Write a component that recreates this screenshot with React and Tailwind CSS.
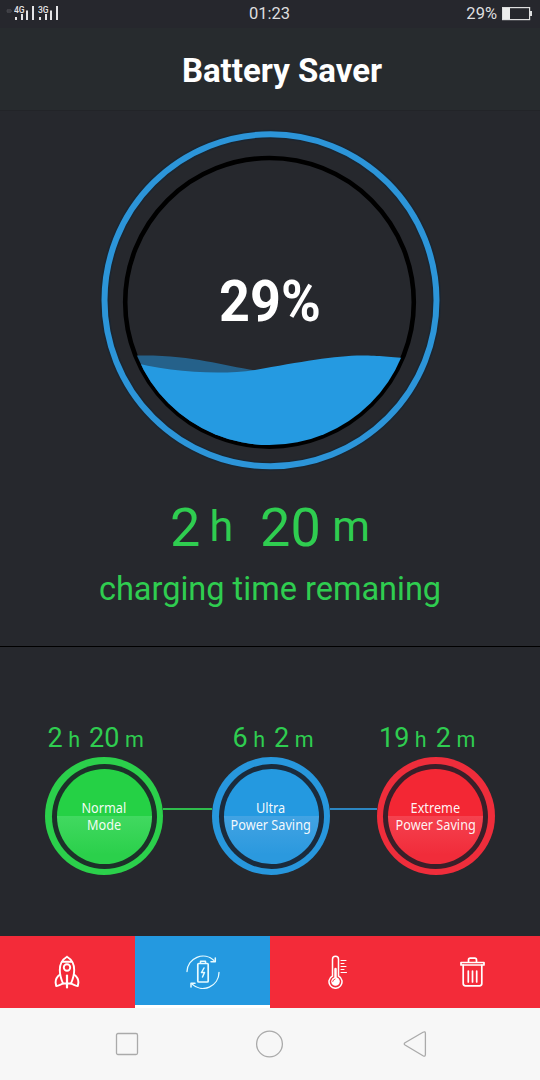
import React from "react";

function Signal({ label }) {
  return (
    <svg width="22" height="16" viewBox="0 0 22 16" className="shrink-0">
      <text x="0" y="6.5" fontFamily="Roboto, sans-serif" fontSize="8.500" fontWeight="500" fill="#e4e4e6">{label}</text>
      <g fill="#e4e4e6">
        <rect x="1" y="11" width="2" height="3" />
        <rect x="7" y="8" width="2" height="6" />
        <rect x="12" y="4.500" width="2" height="9.500" />
        <rect x="18" y="0" width="2" height="14" />
      </g>
    </svg>
  );
}

function StatusBar() {
  return (
    <div className="grid h-7 grid-cols-[1fr_auto_1fr] items-center bg-[#26272d] px-[6px] text-[#dededf]">
      <div className="flex items-center">
        <svg width="8" height="12" viewBox="0 0 8 12" className="mb-[5px]" stroke="#56575c" strokeWidth="1" fill="none">
          <path d="M2 3v4M4 3v4M0.500 5h1M5 5h1" />
        </svg>
        <Signal label="4G" />
        <div className="ml-[1.5px]"><Signal label="3G" /></div>
      </div>
      <div className="-ml-px text-[16.5px] leading-7">01:23</div>
      <div className="flex items-center justify-end gap-[5px] pr-[2px]">
        <span className="text-[16.5px] leading-7">29%</span>
        <svg width="30" height="14" viewBox="0 0 30 14">
          <rect x="0.6" y="0.6" width="27" height="12" fill="none" stroke="#dededf" strokeWidth="1.2" />
          <rect x="1" y="1" width="7" height="11" fill="#ececec" />
          <rect x="28" y="4" width="2" height="5" fill="#dededf" />
        </svg>
      </div>
    </div>
  );
}

function Gauge() {
  return (
    <div className="grid h-[378px] grid-cols-1 grid-rows-1">
      <svg width="540" height="378" viewBox="0 111 540 378" className="col-start-1 row-start-1">
        <defs>
          <clipPath id="bowl"><circle cx="269.5" cy="302.3" r="142.8" /></clipPath>
        </defs>
        <circle cx="270.5" cy="300.3" r="166" fill="none" stroke="#142434" strokeWidth="9" opacity="0.6" />
        <circle cx="270.5" cy="300.3" r="166" fill="none" stroke="#2c95d9" strokeWidth="6" />
        <circle cx="269.5" cy="302.3" r="144.3" fill="none" stroke="#000" strokeWidth="4.6" />
        <g clipPath="url(#bowl)">
          <path d="M125 356C195 353 220 367 265 371.500V450H125Z" fill="#25618a" />
          <path d="M125 360.500C165 371 215 376 255 370C300 362 335 355.500 362 355.500C380 355.500 390 357 415 359V460H125Z" fill="#259ae1" />
        </g>
      </svg>
      <div className="col-start-1 row-start-1 self-start justify-self-center pt-[157px]">
        <div className="scale-x-[0.98] scale-y-[1.05] text-[55px] leading-[66px] font-bold text-white">29%</div>
      </div>
    </div>
  );
}

function ModeTime({ hours, minutes, className }) {
  return (
    <div className={"flex items-baseline text-[27px] leading-[32px] whitespace-pre " + className}>
      <span>{hours}</span>
      <span className="ml-[5.5px] text-[21.5px]">h</span>
      <span className="ml-[9px]">{minutes}</span>
      <span className="ml-[5.5px] text-[21.5px]">m</span>
    </div>
  );
}

function Mode({ lines, ring, gap, disc }) {
  return (
    <div className={"flex size-[118px] shrink-0 rounded-full p-[6.5px] " + ring}>
      <div className={"flex flex-1 rounded-full p-[5px] " + gap}>
        <div className={"flex flex-1 flex-col items-center justify-center rounded-full pt-[2px] text-[13.5px] leading-[17px] whitespace-nowrap text-white/95 " + disc}>
          {lines.map((l) => (
            <span key={l} className="scale-x-[0.94] font-['Noto_Sans',sans-serif]">{l}</span>
          ))}
        </div>
      </div>
    </div>
  );
}

function Rocket() {
  return (
    <svg width="26" height="34" viewBox="0 0 26 34" className="-translate-x-px" fill="none" stroke="#fff" strokeWidth="1.900" strokeLinejoin="round" strokeLinecap="round">
      <path d="M13 1.800C8.500 4.500 5.800 9 5.800 15C5.800 20.500 7.500 25 9 28.500M13 1.800C17.500 4.500 20.200 9 20.200 15C20.200 20.500 18.500 25 17 28.500" />
      <path d="M8.500 6.800H17.500" />
      <circle cx="13" cy="12.500" r="3.200" />
      <path d="M6 19.500C3 21.500 1.600 24 1.600 27.500L2.200 31C4 31 6 30 8.800 28.500M20 19.500C23 21.500 24.400 24 24.400 27.500L23.800 31C22 31 20 30 17.200 28.500" />
      <path d="M9 28.500H17" />
      <path d="M13 20.500V32.500" strokeWidth="2.200" />
    </svg>
  );
}

function BatteryCycle() {
  return (
    <svg width="34" height="34" viewBox="0 0 34 34" fill="none" stroke="#e8fbff" strokeWidth="1.3" strokeLinecap="round" strokeLinejoin="round">
      <path d="M1 16.500A16 16 0 0 1 28 5.500M33 17.500A16 16 0 0 1 6 29" />
      <path d="M29.300 3V6.700H25M5 32V28.300H9" strokeWidth="1.500" />
      <rect x="11.800" y="8.500" width="10.400" height="18.500" rx="1" strokeWidth="1.700" />
      <path d="M14.500 8V6.300H19.500V8" strokeWidth="1.500" />
      <path d="M18 13L15.500 17.500H18.500L16.500 22" strokeWidth="1.500" />
    </svg>
  );
}

function Thermometer() {
  return (
    <svg width="20" height="34" viewBox="0 0 20 34" fill="none" stroke="#fff" strokeWidth="1.5" strokeLinecap="round">
      <path d="M4.500 21V4.200A3 3 0 0 1 10.500 4.200V21A6.500 6.500 0 1 1 4.500 21Z" />
      <path d="M7.500 14V25" strokeWidth="2.500" />
      <circle cx="7.500" cy="26.500" r="4.300" fill="#fff" stroke="none" />
      <path d="M4.700 26.500A3 3 0 0 1 7 24" stroke="#f32b39" strokeWidth="0.900" />
      <path d="M13 5.500H18M13 8.500H16M13 11.500H18M13 14.500H16M13 17.500H18.500" strokeWidth="1.100" />
    </svg>
  );
}

function Trash() {
  return (
    <svg width="25" height="30" viewBox="0 0 25 30" fill="none" stroke="#fff" strokeWidth="1.700" strokeLinejoin="round" strokeLinecap="round">
      <path d="M1 5.500H24V8H1ZM8.500 5V3Q8.500 1.200 10.200 1.200H14.800Q16.500 1.200 16.500 3V5" />
      <path d="M3.200 8V26.500Q3.200 28.800 5.500 28.800H19.500Q21.800 28.800 21.800 26.500V8" />
      <path d="M8.300 14V25M12.500 14V25M16.700 14V25" />
    </svg>
  );
}

function Tab({ children, active }) {
  return (
    <div className={"flex flex-1 items-center justify-center " + (active ? "border-b-[3px] border-white bg-[#2499e0] pt-[3px]" : "bg-[#f32b39]")}>
      {children}
    </div>
  );
}

export default function App() {
  return (
    <div className="flex h-[1080px] w-[540px] flex-col overflow-hidden bg-[#26282d] font-[Roboto,sans-serif]">
      <StatusBar />
      <header className="flex h-[83px] items-center justify-center border-b border-[#222428] bg-[#272b2e] pt-1 pl-6">
        <h1 className="text-[33px] leading-10 font-bold text-white">Battery Saver</h1>
      </header>
      <Gauge />
      <section className="flex h-[157px] flex-col items-center text-[#2fcd50]">
        <div className="mt-[6px] flex h-[64px] text-[54px] leading-[65px]">
          <span>2</span>
          <span className="ml-[9px] text-[43px] leading-[63px]">h</span>
          <span className="ml-[27px]">20</span>
          <span className="ml-[11.5px] text-[43px] leading-[63px]">m</span>
        </div>
        <div className="mt-[8px] text-[32.5px] leading-[44px]">charging time remaning</div>
      </section>
      <section className="h-[290px] border-t border-black pt-[75px]">
        <div className="flex h-[35px] text-[#2fcd50]">
          <ModeTime hours="2" minutes="20" className="w-[184px] pl-[47.5px]" />
          <ModeTime hours="6" minutes="2" className="w-[194px] pl-[48.5px]" />
          <ModeTime hours="19" minutes="2" className="pl-px" />
        </div>
        <div className="flex pl-[45px]">
          <Mode lines={["Normal", "Mode"]} ring="bg-[#2bd04b]" gap="bg-[#1d3029]" disc="bg-[linear-gradient(#25d145_0%,#25d145_50%,#41d960_50%,#2bd04b_90%)]" />
          <div className="mt-[51px] h-[2px] w-[49px] bg-[#2fbd4c]" />
          <Mode lines={["Ultra", "Power Saving"]} ring="bg-[#2797dd]" gap="bg-[#1b2b3c]" disc="bg-[linear-gradient(#2499e0_0%,#2499e0_50%,#42a3e3_50%,#2b99de_90%)]" />
          <div className="mt-[51px] h-[2px] w-[46.5px] bg-[#2c86c1]" />
          <Mode lines={["Extreme", "Power Saving"]} ring="bg-[#ef2d3b]" gap="bg-[#3a1f29]" disc="bg-[linear-gradient(#f32734_0%,#f32734_50%,#f5424f_50%,#f12c3a_90%)]" />
        </div>
      </section>
      <nav className="flex h-[72px]">
        <Tab><Rocket /></Tab>
        <Tab active><BatteryCycle /></Tab>
        <Tab><Thermometer /></Tab>
        <Tab><Trash /></Tab>
      </nav>
      <footer className="flex h-[72px] items-center justify-between bg-[#f7f7f7] pr-[113px] pl-[115px]">
        <svg width="24" height="24" viewBox="0 0 24 24" fill="none" stroke="#aaa" strokeWidth="1.300"><rect x="1.500" y="1.500" width="21" height="21" rx="1.500" /></svg>
        <svg width="28" height="28" viewBox="0 0 28 28" className="-translate-x-[1.5px]" fill="none" stroke="#aaa" strokeWidth="1.300"><circle cx="14" cy="14" r="12.900" /></svg>
        <svg width="24" height="28" viewBox="0 0 24 28" fill="none" stroke="#aaa" strokeWidth="1.300"><path d="M20 2.300Q22.400 1 22.400 3.500V24.500Q22.400 27 20 25.700L2 15Q0.500 14 2 12.800Z" /></svg>
      </footer>
    </div>
  );
}
